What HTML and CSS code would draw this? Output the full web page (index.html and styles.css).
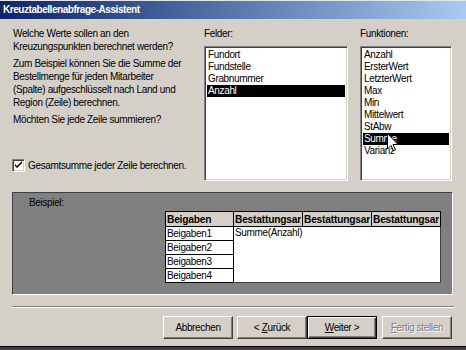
FILE: index.html
```html
<!DOCTYPE html>
<html>
<head>
    <title>Kreuztabellenabfrage-Assistent</title>
    <link rel="stylesheet" href="styles.css">
</head>
<body>
    <div class="window">
        <div class="titlebar">Kreuztabellenabfrage-Assistent</div>

        <div class="content">
            <div class="top">
                <div class="intro">
                    <p>Welche Werte sollen an den<br>Kreuzungspunkten berechnet werden?</p>
                    <p>Zum Beispiel können Sie die Summe der<br>Bestellmenge für jeden Mitarbeiter<br>(Spalte) aufgeschlüsselt nach Land und<br>Region (Zeile) berechnen.</p>
                    <p>Möchten Sie jede Zeile summieren?</p>
                    <label class="check-row">
                        <span class="checkbox">
                            <svg width="9" height="9" viewBox="0 0 9 9"><path d="M1 3 L3 5 L8 0 L8 2 L3 7 L1 5 Z" fill="#000"/></svg>
                        </span>
                        Gesamtsumme jeder Zeile berechnen.
                    </label>
                </div>

                <div class="field-col">
                    <div class="label">Felder:</div>
                    <div class="listbox">
                        <div class="item">Fundort</div>
                        <div class="item">Fundstelle</div>
                        <div class="item">Grabnummer</div>
                        <div class="item selected">Anzahl</div>
                    </div>
                </div>

                <div class="func-col">
                    <div class="label">Funktionen:</div>
                    <div class="listbox">
                        <div class="item">Anzahl</div>
                        <div class="item">ErsterWert</div>
                        <div class="item">LetzterWert</div>
                        <div class="item">Max</div>
                        <div class="item">Min</div>
                        <div class="item">Mittelwert</div>
                        <div class="item">StAbw</div>
                        <div class="item selected">Summe</div>
                        <div class="item">Varianz</div>
                        <svg class="cursor" width="12" height="19" viewBox="0 0 12 19">
                            <path d="M0.5 0.5 L0.5 16 L4 12.5 L6.5 18 L8.5 17 L6 11.5 L11 11.5 Z" fill="#fff" stroke="#000" stroke-width="1"/>
                        </svg>
                    </div>
                </div>
            </div>

            <div class="sample">
                <div class="sample-label">Beispiel:</div>
                <table class="grid">
                    <tr>
                        <th class="col-first"><div>Beigaben</div></th>
                        <th><div>Bestattungsart</div></th>
                        <th><div>Bestattungsart</div></th>
                        <th><div>Bestattungsart</div></th>
                    </tr>
                    <tr>
                        <td class="row-head">Beigaben1</td>
                        <td class="values" colspan="3" rowspan="4">Summe(Anzahl)</td>
                    </tr>
                    <tr><td class="row-head">Beigaben2</td></tr>
                    <tr><td class="row-head">Beigaben3</td></tr>
                    <tr><td class="row-head">Beigaben4</td></tr>
                </table>
            </div>
        </div>

        <div class="separator"></div>

        <div class="buttons">
            <button class="btn">Abbrechen</button>
            <div class="nav-pair">
                <button class="btn">&lt; <u>Z</u>urück</button>
                <button class="btn default"><u>W</u>eiter &gt;</button>
            </div>
            <button class="btn disabled"><u>F</u>ertig stellen</button>
        </div>
    </div>
</body>
</html>
```

FILE: styles.css
```css
* {
    margin: 0;
    padding: 0;
    box-sizing: border-box;
}

body {
    width: 466px;
    height: 350px;
    overflow: hidden;
    background-color: #d4d0c8;
    font-family: "Liberation Sans", Arial, sans-serif;
    font-size: 10px;
    letter-spacing: -0.35px;
    color: #000;
}

.window {
    height: 350px;
    display: flex;
    flex-direction: column;
    border-top: 1px solid #e8e6e0;
    border-bottom: 3px solid #404040;
    box-shadow: inset 0 -1px #000;
}

.titlebar {
    height: 18px;
    line-height: 18px;
    padding-left: 3px;
    background: linear-gradient(to right, #0a246a, #a6caf0);
    color: #fff;
    font-weight: bold;
    font-size: 10px;
    letter-spacing: -0.45px;
}

.content {
    padding: 8px 0 0 12px;
}

.top {
    display: grid;
    grid-template-columns: 192px 144px 104px;
}

.func-col {
    padding-left: 12px;
}

.intro {
    padding-left: 1px;
    line-height: 13px;
    white-space: nowrap;
}

.intro p {
    margin-bottom: 4px;
}

.check-row {
    display: flex;
    align-items: center;
    gap: 3px;
    margin-top: 33px;
    margin-left: -1px;
}

.checkbox {
    width: 13px;
    height: 13px;
    background: #fff;
    border: 1px solid;
    border-color: #808080 #fff #fff #808080;
    box-shadow: inset 1px 1px #404040, inset -1px -1px #d4d0c8;
    display: flex;
    align-items: center;
    justify-content: center;
}

.label {
    line-height: 13px;
    margin-bottom: 6px;
}

.listbox {
    position: relative;
    height: 135px;
    background: #fff;
    border: 1px solid;
    border-color: #808080 #fff #fff #808080;
    box-shadow: inset 1px 1px #404040, inset -1px -1px #d4d0c8;
    padding: 2px 2px 0 2px;
}

.item {
    height: 12px;
    line-height: 12px;
    padding-left: 1px;
    white-space: nowrap;
}

.item.selected {
    background: #000;
    color: #fff;
}

.cursor {
    position: absolute;
    left: 26px;
    top: 86px;
}

.sample {
    margin-top: 11px;
    width: 441px;
    height: 103px;
    background: #808080;
    border: 1px solid;
    border-color: #404040 #fff #fff #404040;
    padding: 3px 0 0 16px;
}

.sample-label {
    line-height: 13px;
}

.grid {
    border-collapse: collapse;
    table-layout: fixed;
    margin-left: 136px;
    margin-top: 2px;
    width: 274px;
}

.grid th {
    height: 15px;
    background: #d4d0c8;
    border: 1px solid #000;
    font-weight: bold;
    font-size: 10.2px;
    letter-spacing: -0.2px;
    text-align: left;
    padding: 0 1px;
    width: 69px;
}

.grid th.col-first {
    width: 68px;
}

.grid th div {
    overflow: hidden;
    white-space: nowrap;
    line-height: 13px;
}

.grid td {
    background: #fff;
    padding: 0 1px;
    line-height: 12px;
}

.grid td.row-head {
    height: 14px;
    border: 1px solid #000;
    white-space: nowrap;
}

.grid td.values {
    vertical-align: top;
    border-left: 1px solid #000;
    border-right: 1px solid #404040;
    border-bottom: 1px solid #404040;
}

.separator {
    margin: 11px 12px 0 12px;
    height: 2px;
    border-top: 1px solid #808080;
    border-bottom: 1px solid #fff;
}

.buttons {
    display: flex;
    align-items: center;
    margin-top: 8px;
    padding-left: 163px;
    gap: 4px;
}

.nav-pair {
    display: flex;
    margin-right: 1px;
}

.btn {
    width: 70px;
    height: 23px;
    background: #d4d0c8;
    font-family: "Liberation Sans", Arial, sans-serif;
    font-size: 10px;
    letter-spacing: -0.35px;
    color: #000;
    border: 1px solid;
    border-color: #fff #404040 #404040 #fff;
    box-shadow: inset -1px -1px #808080;
}

.btn.default {
    border: 1px solid #000;
    box-shadow: inset 1px 1px #fff, inset -1px -1px #404040, inset -2px -2px #808080;
}

.btn.disabled {
    color: #808080;
    text-shadow: 1px 1px #fff;
}
```
